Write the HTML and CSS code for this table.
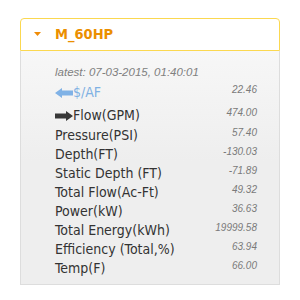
FILE: index.html
```html
<!DOCTYPE html>
<html>
<head>
<meta charset="utf-8">
<link rel="stylesheet" href="styles.css">
</head>
<body>
<div class="panel">
  <div class="header">
    <svg class="tri" width="7" height="4" viewBox="0 0 7 4"><polygon points="0,0 7,0 3.5,4" fill="#ef8c08"/></svg>
    <span class="title">M_60HP</span>
  </div>
  <div class="content">
    <div class="latest">latest: 07-03-2015, 01:40:01</div>
    <div class="row r1">
      <span class="label blue"><svg class="arrow" width="18" height="10" viewBox="0 0 18 10"><polygon points="0,5 7,0 7,2.5 18,2.5 18,7.5 7,7.5 7,10" fill="#80b2e6"/></svg>$/AF</span>
      <span class="val">22.46</span>
    </div>
    <div class="row r2">
      <span class="label"><svg class="arrow" width="18" height="10" viewBox="0 0 18 10"><polygon points="18,5 11,0 11,2.5 0,2.5 0,7.5 11,7.5 11,10" fill="#383838"/></svg>Flow(GPM)</span>
      <span class="val">474.00</span>
    </div>
    <div class="row"><span class="label">Pressure(PSI)</span><span class="val">57.40</span></div>
    <div class="row"><span class="label">Depth(FT)</span><span class="val">-130.03</span></div>
    <div class="row"><span class="label">Static Depth (FT)</span><span class="val">-71.89</span></div>
    <div class="row"><span class="label">Total Flow(Ac-Ft)</span><span class="val">49.32</span></div>
    <div class="row"><span class="label">Power(kW)</span><span class="val">36.63</span></div>
    <div class="row"><span class="label">Total Energy(kWh)</span><span class="val">19999.58</span></div>
    <div class="row"><span class="label">Efficiency (Total,%)</span><span class="val">63.94</span></div>
    <div class="row"><span class="label">Temp(F)</span><span class="val">66.00</span></div>
  </div>
</div>
</body>
</html>
```
FILE: styles.css
```css
html, body {
  margin: 0;
  padding: 0;
  background: #fff;
}
.panel {
  margin: 18px 0 0 20px;
  width: 260px;
}
.header {
  box-sizing: border-box;
  height: 33px;
  border: 1px solid #fbd850;
  border-radius: 4px 4px 0 0;
  background: #fff;
  display: flex;
  align-items: center;
  padding-left: 13px;
}
.tri {
  display: block;
  margin-top: -1px;
}
.title {
  margin-left: 14px;
  font-family: "DejaVu Sans Condensed", "DejaVu Sans", sans-serif;
  font-weight: bold;
  font-size: 14.5px;
  line-height: 31px;
  color: #eb8f00;
}
.content {
  border: 1px solid #ddd;
  border-top: 0;
  background: linear-gradient(#f7f7f7, #eeeeee 110px, #eeeeee);
  padding: 15px 22px 6px 34px;
}
.latest {
  font-family: "Liberation Sans", Arial, sans-serif;
  font-style: italic;
  font-size: 11.5px;
  line-height: 13px;
  color: #808080;
  margin-bottom: 4px;
}
.row {
  display: flex;
  justify-content: space-between;
  align-items: flex-start;
  height: 19px;
}
.row.r1 { height: 23px; }
.row.r2 { height: 20px; }
.label {
  display: flex;
  align-items: center;
  font-family: "DejaVu Sans Condensed", "DejaVu Sans", sans-serif;
  font-size: 14px;
  line-height: 19px;
  color: #333;
}
.label.blue { color: #80b1e3; }
.arrow {
  display: block;
  margin-top: 1px;
}
.val {
  font-family: "Liberation Sans", Arial, sans-serif;
  font-style: italic;
  font-size: 10px;
  line-height: 13px;
  color: #7a7a7a;
}
```
